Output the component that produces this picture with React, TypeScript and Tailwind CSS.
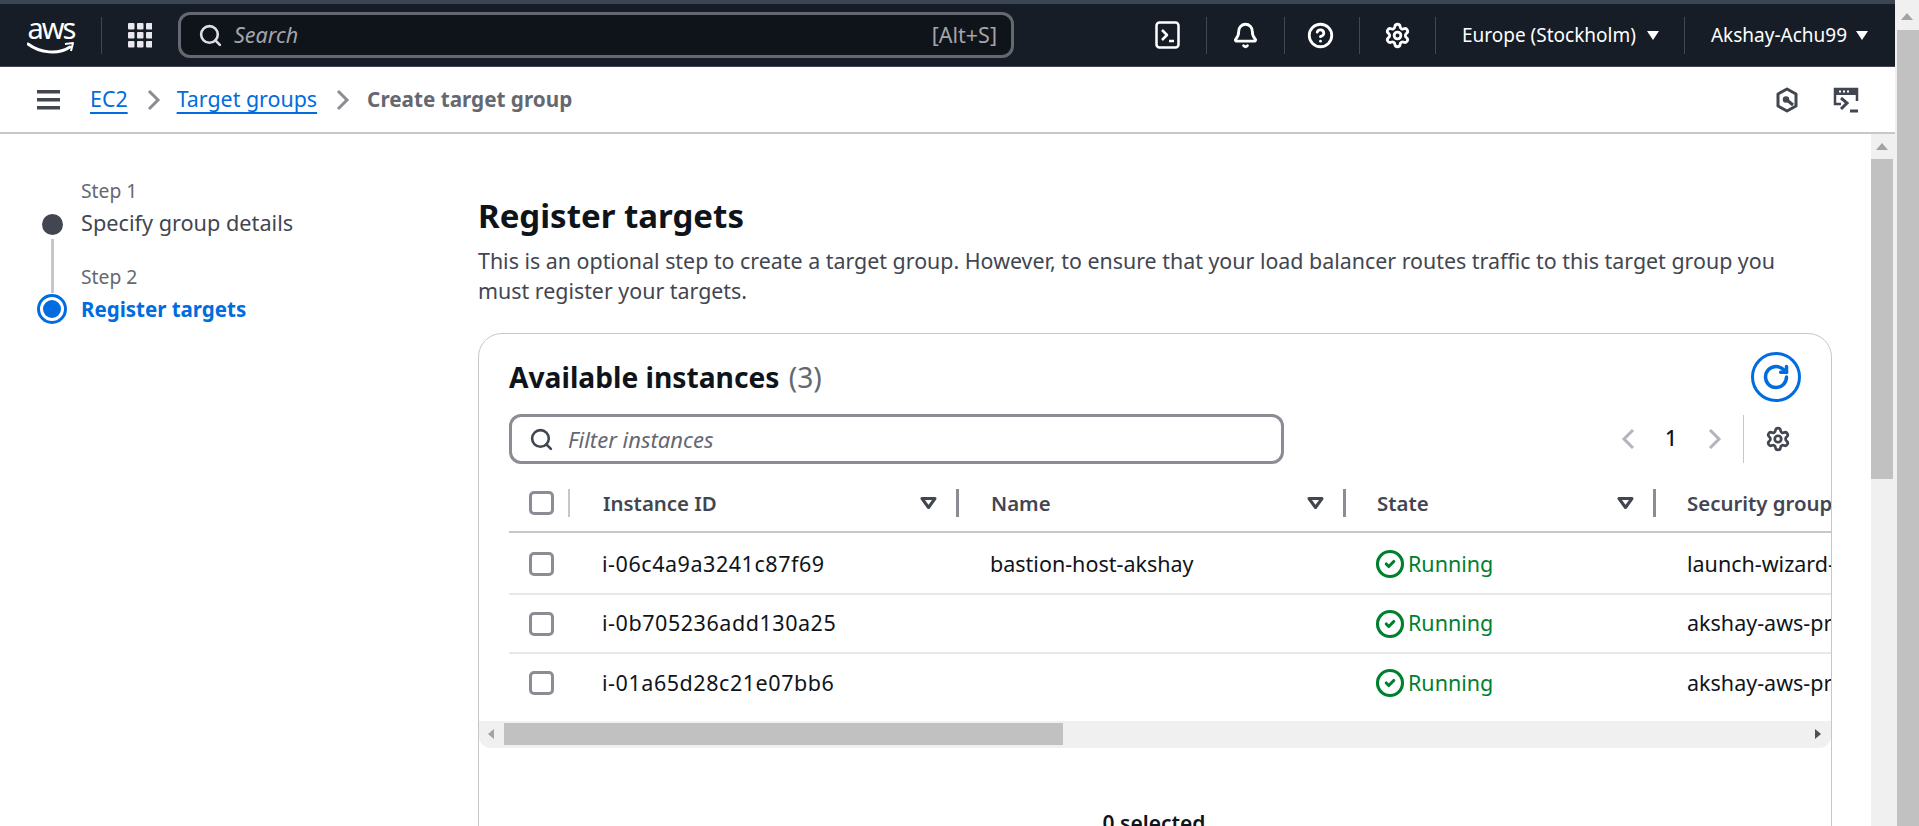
import { Bell, CircleCheck, CircleHelp, RotateCw, Search, Settings } from 'lucide-react'

const instances = [
  { id: 'i-06c4a9a3241c87f69', name: 'bastion-host-akshay', sg: 'launch-wizard-1', height: 'h-[62px] pt-[2px]' },
  { id: 'i-0b705236add130a25', name: '', sg: 'akshay-aws-project', height: 'h-[59px]' },
  { id: 'i-01a65d28c21e07bb6', name: '', sg: 'akshay-aws-project', height: 'h-[58px]' },
]

function Caret() {
  return (
    <svg width="14" height="11" viewBox="0 0 14 11">
      <path d="M1 1h12L7 10z" fill="#fff" />
    </svg>
  )
}

function NavDivider() {
  return <div className="h-[37px] w-px bg-[#424650]" />
}

function SortIcon() {
  return (
    <svg width="17" height="14" viewBox="0 0 17 14" fill="none" stroke="#424650" strokeWidth="3" strokeLinejoin="round">
      <path d="M2 2.5h13L8.5 11.5z" />
    </svg>
  )
}

function Checkbox() {
  return <div className="h-[24px] w-[25px] rounded-[5px] border-[3px] border-[#8c8c94] bg-white" />
}

function Chevron({ dir, color, className }: { dir: 'left' | 'right'; color: string; className?: string }) {
  return (
    <svg className={className} width="14" height="22" viewBox="0 0 14 22" fill="none" stroke={color} strokeWidth="3">
      <path d={dir === 'left' ? 'M12 2L3 11l9 9' : 'M2 2l9 9-9 9'} />
    </svg>
  )
}

export default function App() {
  return (
    <div className="flex h-screen w-full overflow-hidden bg-white font-['Noto_Sans',sans-serif] text-[21.4px] text-[#0f141a]">
      <div className="flex min-w-0 flex-1 flex-col">
        {/* Top nav */}
        <header className="flex h-[67px] shrink-0 items-center border-t-[4px] border-b-[1px] border-t-[#3b4654] border-b-[#424650] bg-[#161d26] pl-[27px]">
          <div className="relative h-[44px] w-[48px] shrink-0">
            <span className="block text-center text-[29px] leading-[30px] font-normal tracking-[-2px] text-white">aws</span>
            <svg className="absolute bottom-0 left-0" width="48" height="16" viewBox="0 0 48 16" fill="none">
              <path d="M1 3c12 9 30 11 42 3" stroke="#fff" strokeWidth="3" strokeLinecap="round" />
              <path d="M38 3l8-1-2 8" stroke="#fff" strokeWidth="2" strokeLinejoin="round" />
            </svg>
          </div>
          <div className="mr-[26px] ml-[26px] h-[37px] w-px bg-[#424650]" />
          <svg width="24" height="25" viewBox="0 0 24 25" fill="#e8e8ee">
            {[0, 9, 18].map(y => [0, 9, 18].map(x => <rect key={`${x}-${y}`} x={x} y={y} width="6.5" height="6.5" rx="1" />))}
          </svg>
          <div className="ml-[26px] flex h-[46px] w-[836px] items-center rounded-[12px] border-[3px] border-[#656871] bg-[#0f141a] pr-[14px] pl-[17px]">
            <Search size={25} color="#dedee3" strokeWidth={2.5} />
            <span className="ml-[11px] text-[21.5px] text-[#a4a4ad] italic">Search</span>
            <span className="ml-auto text-[21.5px] text-[#a4a4ad]">[Alt+S]</span>
          </div>
          <div className="ml-[140px] flex items-center text-white">
            <div className="flex w-[26px] justify-center">
              <svg width="25" height="28" viewBox="0 0 25 28" fill="none" stroke="#fff" strokeWidth="2.5" strokeLinejoin="round">
                <rect x="1.5" y="1.5" width="22" height="25" rx="3" />
                <path d="M7 9l5 5-5 5" />
                <path d="M14 20h5" />
              </svg>
            </div>
            <div className="mr-[25px] ml-[26px]"><NavDivider /></div>
            <Bell size={27} strokeWidth={2.5} />
            <div className="mr-[22px] ml-[25px]"><NavDivider /></div>
            <CircleHelp size={27} strokeWidth={2.5} />
            <div className="mr-[24px] ml-[25px]"><NavDivider /></div>
            <Settings size={27} strokeWidth={2.5} />
            <div className="mr-[26px] ml-[24px]"><NavDivider /></div>
            <span className="text-[19px] whitespace-nowrap">Europe (Stockholm)</span>
            <div className="ml-[10px]"><Caret /></div>
            <div className="mr-[26px] ml-[24px]"><NavDivider /></div>
            <span className="text-[19px] whitespace-nowrap">Akshay-Achu99</span>
            <div className="ml-[8px]"><Caret /></div>
          </div>
        </header>

        {/* Breadcrumbs */}
        <div className="flex h-[67px] shrink-0 items-center border-b-[2px] border-[#c6c6cd] pr-[36px] pl-[37px]">
          <svg width="23" height="20" viewBox="0 0 23 20" fill="#424650">
            <rect y="0" width="23" height="3.5" />
            <rect y="8" width="23" height="3.5" />
            <rect y="16" width="23" height="3.5" />
          </svg>
          <a className="ml-[30px] text-[#006ce0] underline decoration-2 underline-offset-[5px]">EC2</a>
          <Chevron dir="right" color="#8c8c94" className="mr-[16px] ml-[19px]" />
          <a className="text-[#006ce0] underline decoration-2 underline-offset-[5px]">Target groups</a>
          <Chevron dir="right" color="#8c8c94" className="mr-[17px] ml-[19px]" />
          <span className="text-[20.7px] font-bold text-[#656871]">Create target group</span>
          <svg className="ml-auto" width="24" height="26" viewBox="0 0 24 26" fill="none" stroke="#424650" strokeWidth="3" strokeLinejoin="round">
            <path d="M12 2l9 5v12l-9 5-9-5V7z" />
            <path d="M12 13l6 5" />
            <circle cx="11" cy="12.5" r="2.5" fill="#424650" strokeWidth="1.5" />
          </svg>
          <svg className="ml-[34px]" width="26" height="26" viewBox="0 0 26 26" fill="none" stroke="#424650" strokeWidth="2.5">
            <path d="M8 17H2V2h22v12" />
            <rect x="1" y="1" width="24" height="7" fill="#424650" stroke="none" />
            <path d="M6 4.5h2M10 4.5h2M14 4.5h2" stroke="#fff" strokeWidth="2" />
            <path d="M8 11l6 5-6 6" strokeWidth="3" />
            <path d="M17 24h8" strokeWidth="3" />
          </svg>
        </div>

        {/* Body */}
        <div className="flex min-h-0 flex-1">
          <aside className="w-[478px] shrink-0">
            <div className="pt-[44px] pl-[81px]">
              <div className="text-[19.3px] leading-[26px] text-[#656871]">Step 1</div>
              <div className="relative mt-[4px] text-[21.7px] leading-[30px] text-[#424650]">
                <span className="absolute top-[6px] left-[-39px] h-[21px] w-[21px] rounded-full bg-[#424650]" />
                <span className="absolute top-[31px] left-[-30px] h-[54px] w-[3px] bg-[#c6c6cd]" />
                Specify group details
              </div>
              <div className="mt-[26px] text-[19.3px] leading-[26px] text-[#656871]">Step 2</div>
              <div className="relative mt-[4px] text-[20.5px] leading-[30px] font-bold text-[#006ce0]">
                <span className="absolute top-0 left-[-44px] flex h-[30px] w-[30px] items-center justify-center rounded-full border-[3px] border-[#006ce0]">
                  <span className="h-[18px] w-[18px] rounded-full bg-[#006ce0]" />
                </span>
                Register targets
              </div>
            </div>
          </aside>

          <main className="min-w-0 flex-1 pt-[60px]">
            <div className="w-[1354px]">
              <h1 className="text-[33px] leading-[44px] font-bold">Register targets</h1>
              <p className="mt-[8px] w-[1340px] leading-[30px] text-[#424650]">
                This is an optional step to create a target group. However, to ensure that your load balancer routes traffic to this target group you must register your targets.
              </p>
              <div className="mt-[27px] h-[600px] overflow-hidden rounded-[24px] border border-[#c6c6cd]">
                <div className="flex h-[80px] items-center justify-between pt-[6px] pr-[30px] pl-[30px]">
                  <h2 className="text-[28.2px] font-bold">
                    Available instances <span className="ml-[2px] font-normal text-[#656871]">(3)</span>
                  </h2>
                  <button className="flex h-[50px] w-[50px] items-center justify-center rounded-full border-[3px] border-[#006ce0]">
                    <RotateCw size={28} color="#006ce0" strokeWidth={3} />
                  </button>
                </div>
                <div className="flex h-[50px] items-center pl-[30px]">
                  <div className="flex h-[50px] w-[775px] items-center rounded-[12px] border-[3px] border-[#8c8c94] pl-[17px]">
                    <Search size={25} color="#424650" strokeWidth={2.5} />
                    <span className="ml-[14px] text-[22px] text-[#656871] italic">Filter instances</span>
                  </div>
                  <Chevron dir="left" color="#b4b4bb" className="ml-[337px]" />
                  <span className="ml-[30px] text-[21px] font-medium">1</span>
                  <Chevron dir="right" color="#b4b4bb" className="ml-[31px]" />
                  <div className="ml-[21px] h-[48px] w-px bg-[#c6c6cd]" />
                  <Settings size={26} color="#424650" strokeWidth={2.5} className="ml-[21px]" />
                </div>

                {/* Table */}
                <div className="ml-[30px] overflow-hidden">
                  <div className="mt-[18px] flex h-[51px] w-[1400px] items-center border-b-[2px] border-[#c6c6cd] pb-[7px] text-[20.4px] font-semibold text-[#424650]">
                    <div className="flex w-[60px] shrink-0 items-center pl-[20px]"><Checkbox /></div>
                    <div className="mr-[32px] h-[28px] w-[2px] -translate-x-[1px] bg-[#c6c6cd]" />
                    <div className="flex w-[356px] shrink-0 items-center justify-between">
                      <span>Instance ID</span>
                      <div className="flex items-center gap-[19px]"><SortIcon /><div className="h-[28px] w-[3px] bg-[#8c8c94]" /></div>
                    </div>
                    <div className="ml-[32px] flex w-[355px] shrink-0 items-center justify-between">
                      <span>Name</span>
                      <div className="flex items-center gap-[19px]"><SortIcon /><div className="h-[28px] w-[3px] bg-[#8c8c94]" /></div>
                    </div>
                    <div className="ml-[31px] flex w-[279px] shrink-0 items-center justify-between">
                      <span>State</span>
                      <div className="flex items-center gap-[19px]"><SortIcon /><div className="h-[28px] w-[3px] bg-[#8c8c94]" /></div>
                    </div>
                    <span className="ml-[31px] whitespace-nowrap">Security group name</span>
                  </div>
                  {instances.map((row, i) => (
                    <div key={row.id} className={`flex w-[1400px] items-center text-[21.5px] ${row.height} ${i < 2 ? 'border-b-[2px] border-[#e8e8ea]' : ''}`}>
                      <div className="flex w-[93px] shrink-0 items-center pl-[20px]"><Checkbox /></div>
                      <span className="w-[388px] shrink-0 tracking-[0.55px]">{row.id}</span>
                      <span className="w-[385px] shrink-0">{row.name}</span>
                      <div className="flex w-[312px] shrink-0 items-center gap-[3px] text-[#00802f]">
                        <CircleCheck size={30} strokeWidth={2.5} />
                        Running
                      </div>
                      <span className="whitespace-nowrap">{row.sg}</span>
                    </div>
                  ))}
                </div>

                {/* Table scrollbar */}
                <div className="relative mt-[9px] h-[27px] rounded-b-[12px] bg-[#f0f0f0]">
                  <div className="absolute top-[2px] left-[25px] h-[22px] w-[559px] bg-[#c1c1c1]" />
                  <svg className="absolute top-[8px] left-[9px]" width="6" height="10" viewBox="0 0 6 10"><path d="M6 0v10L0 5z" fill="#a3a3a3" /></svg>
                  <svg className="absolute top-[8px] right-[10px]" width="6" height="10" viewBox="0 0 6 10"><path d="M0 0v10l6-5z" fill="#505050" /></svg>
                </div>

                <div className="pt-[60px] pr-[2px] text-center text-[21px] font-semibold">0 selected</div>
              </div>
            </div>
          </main>

          <div className="relative h-full w-[24px] shrink-0 bg-[#f0f0f0] pt-[25px]">
            <svg className="absolute top-[9px] left-[5px]" width="12" height="7" viewBox="0 0 12 7"><path d="M6 0l6 7H0z" fill="#a3a3a3" /></svg>
            <div className="h-[320px] w-[22px] bg-[#c1c1c1]" />
          </div>
        </div>
      </div>

      {/* Window scrollbar */}
      <div className="relative h-full w-[24px] shrink-0 bg-[#f0f0f0] pt-[30px]">
        <svg className="absolute top-[13px] left-[6px]" width="12" height="7" viewBox="0 0 12 7"><path d="M6 0l6 7H0z" fill="#a3a3a3" /></svg>
        <div className="ml-[2px] h-[796px] w-[22px] bg-[#c1c1c1]" />
      </div>
    </div>
  )
}
